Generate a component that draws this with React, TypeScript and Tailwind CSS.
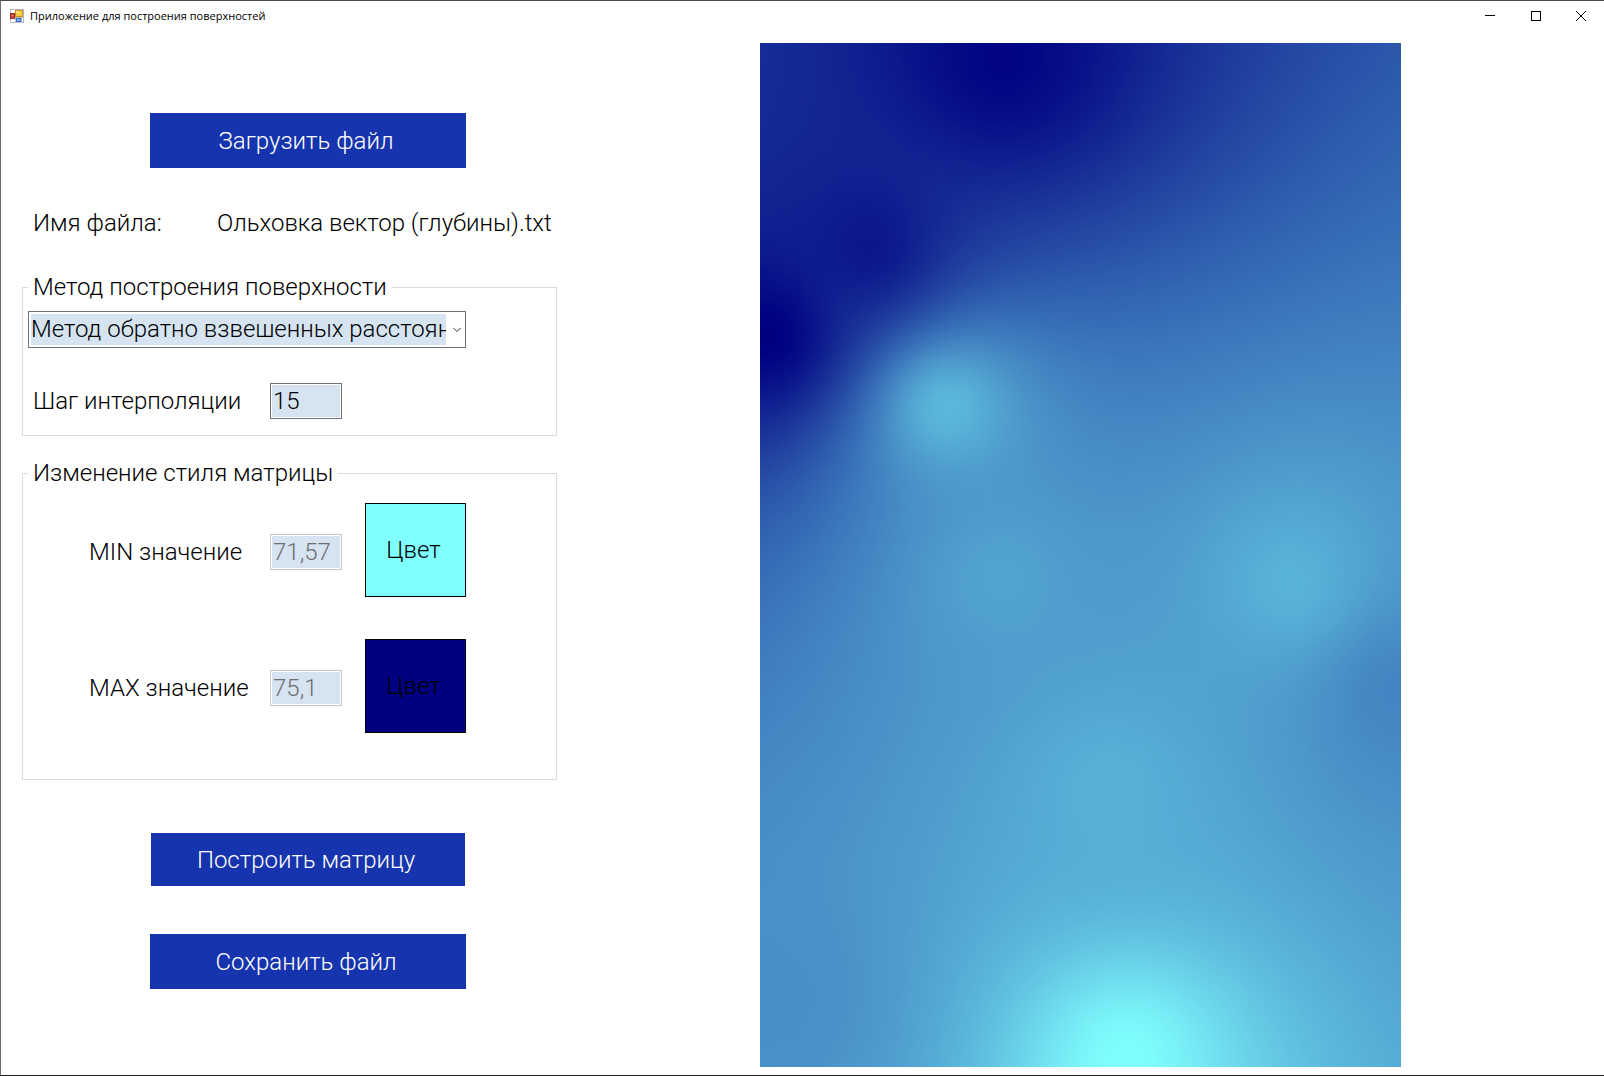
import { useEffect, useRef, useState } from "react";

type Sample = { x: number; y: number; t: number; weight: number };

// Depth samples: position on a 641 x 1024 field, t = 0 is the MIN colour and 1 the MAX colour.
const SAMPLES: Sample[] = [
  { x: 242, y: 16, t: 0.98, weight: 1.45 },
  { x: 108, y: 202, t: 0.91, weight: 1 },
  { x: 6, y: 292, t: 1, weight: 1.1 },
  { x: 188, y: 365, t: 0.28, weight: 0.95 },
  { x: 240, y: 534, t: 0.36, weight: 1 },
  { x: 531, y: 540, t: 0.3, weight: 1 },
  { x: 636, y: 648, t: 0.475, weight: 1 },
  { x: 349, y: 742, t: 0.31, weight: 1 },
  { x: 366, y: 1016, t: 0, weight: 0.8 },
  { x: 10, y: 955, t: 0.44, weight: 1 },
];

const FIELD_W = 641;
const FIELD_H = 1024;
const COLS = 178;
const ROWS = 284;
const MIN_COLOR = [128, 255, 255];
const MAX_COLOR = [0, 0, 128];

function interpolate(x: number, y: number) {
  let sum = 0;
  let weights = 0;
  for (const s of SAMPLES) {
    const d2 = (x - s.x) ** 2 + (y - s.y) ** 2 + 1;
    const w = s.weight / d2;
    sum += w * s.t;
    weights += w;
  }
  return sum / weights;
}

function Surface() {
  const ref = useRef<HTMLCanvasElement>(null);
  useEffect(() => {
    const ctx = ref.current?.getContext("2d");
    if (!ctx) return;
    const image = ctx.createImageData(COLS, ROWS);
    for (let r = 0; r < ROWS; r++) {
      for (let c = 0; c < COLS; c++) {
        const t = interpolate(((c + 0.5) * FIELD_W) / COLS, ((r + 0.5) * FIELD_H) / ROWS);
        const i = (r * COLS + c) * 4;
        for (let k = 0; k < 3; k++) {
          image.data[i + k] = MIN_COLOR[k] + (MAX_COLOR[k] - MIN_COLOR[k]) * t;
        }
        image.data[i + 3] = 255;
      }
    }
    ctx.putImageData(image, 0, 0);
  }, []);
  return (
    <canvas
      ref={ref}
      width={COLS}
      height={ROWS}
      role="img"
      aria-label="Поверхность глубин"
      className="block aspect-[641/1024] h-[calc(100vh-52px)] min-h-[640px]"
    />
  );
}

function FormIcon() {
  return (
    <svg width="14" height="14" viewBox="0 0 14 14" shapeRendering="crispEdges" aria-hidden="true">
      <rect x="0" y="0" width="14" height="14" fill="#b9bcc0" />
      <rect x="1" y="1" width="4" height="3" fill="#fff" />
      <rect x="1" y="10" width="4" height="3" fill="#fff" />
      <rect x="12" y="9" width="1" height="4" fill="#fff" />
      <rect x="0" y="4" width="5" height="6" fill="#9c2a2a" />
      <rect x="1" y="5" width="3" height="4" fill="#c94a44" />
      <rect x="2" y="6" width="1" height="1" fill="#f0b0a8" />
      <rect x="5" y="1" width="8" height="7" fill="#c9921a" />
      <rect x="6" y="2" width="6" height="5" fill="#f8cf3f" />
      <rect x="6" y="2" width="3" height="2" fill="#fde98a" />
      <rect x="6" y="9" width="5" height="4" fill="#3c6fc4" />
      <rect x="7" y="10" width="3" height="2" fill="#86b1ee" />
    </svg>
  );
}

function TitleBar() {
  return (
    <header className="flex h-[30px] items-center pl-[9px] font-['Open_Sans','Noto_Sans',sans-serif] text-[11px] leading-[16px] font-normal text-black">
      <FormIcon />
      <h1 className="ml-[6px] flex-1">Приложение для построения поверхностей</h1>
      <button aria-label="Свернуть" className="flex h-full w-[46px] items-center justify-center">
        <svg width="10" height="10" shapeRendering="crispEdges"><path d="M0 4.5H10" stroke="#000" /></svg>
      </button>
      <button aria-label="Развернуть" className="flex h-full w-[45px] items-center justify-center">
        <svg width="10" height="10" shapeRendering="crispEdges"><path d="M.5 .5H9.5V9.5H.5Z" fill="none" stroke="#000" /></svg>
      </button>
      <button aria-label="Закрыть" className="flex h-full w-[46px] items-center justify-center">
        <svg width="10" height="10"><path d="M0 0L10 10M10 0L0 10" stroke="#000" /></svg>
      </button>
    </header>
  );
}

const action = "block bg-[#1534ad] pr-[4px] text-white";
const field = "h-[36px] w-[72px] border bg-[#d6e4f2] px-[2px] shadow-[inset_0_0_0_1px_#fff]";
const swatch = "h-[94px] w-[101px] border border-black pr-[4px] text-black";

function ValueRow({ id, label, value, swatchClass }: { id: string; label: string; value: string; swatchClass: string }) {
  return (
    <div className="flex items-start pl-[61px]">
      <div className="flex items-center pt-[31px]">
        <label htmlFor={id} className="w-[181px]">{label}</label>
        <input id={id} defaultValue={value} disabled className={`${field} border-[#c3c5ca] text-[#6d6d6d]`} />
      </div>
      <button className={`${swatch} ml-[23px] ${swatchClass}`}>Цвет</button>
    </div>
  );
}

export default function App() {
  const [method, setMethod] = useState("idw");
  return (
    <div className="flex min-h-screen flex-col border-y border-l border-t-[#4a4a4a] border-b-[#222] border-l-[#6b6b6b] bg-white font-['Roboto',sans-serif] text-[24px] leading-[28px] font-light text-black">
      <TitleBar />
      <main className="flex flex-1">
        <form className="ml-[21px] w-[535px] shrink-0 pt-[82px]" onSubmit={(e) => e.preventDefault()}>
          <button type="button" className={`${action} ml-[128px] h-[55px] w-[316px]`}>Загрузить файл</button>
          <dl className="mt-[41px] flex pl-[11px]">
            <dt className="w-[184px]">Имя файла:</dt>
            <dd className="whitespace-nowrap">Ольховка вектор (глубины).txt</dd>
          </dl>

          <fieldset className="mt-[36px] h-[163px] border border-[#dcdcdc] px-[5px]">
            <legend className="px-[5px]">Метод построения поверхности</legend>
            <label className="mt-[10px] flex h-[37px] w-[438px] items-center border border-[#6f7278] p-[2px]">
              <select
                aria-label="Метод построения поверхности"
                value={method}
                onChange={(e) => setMethod(e.target.value)}
                className="h-[31px] w-[415px] appearance-none overflow-hidden bg-[#d6e4f2] pb-[2px] text-clip"
              >
                <option value="idw">Метод обратно взвешенных расстояний</option>
              </select>
              <svg className="ml-[7px]" width="8" height="6" aria-hidden="true">
                <path d="M.5 1L4 4.5L7.5 1" fill="none" stroke="#333" />
              </svg>
            </label>
            <div className="mt-[35px] flex items-center pl-[5px]">
              <label htmlFor="step" className="w-[237px]">Шаг интерполяции</label>
              <input id="step" defaultValue="15" className={`${field} border-[#6f7278]`} />
            </div>
          </fieldset>

          <fieldset className="mt-[23px] h-[321px] border border-[#dcdcdc] px-[5px]">
            <legend className="px-[5px]">Изменение стиля матрицы</legend>
            <div className="mt-[16px] flex flex-col gap-[42px]">
              <ValueRow id="min" label="MIN значение" value="71,57" swatchClass="bg-[#80ffff]" />
              <ValueRow id="max" label="MAX значение" value="75,1" swatchClass="bg-[#000080]" />
            </div>
          </fieldset>

          <button type="button" className={`${action} mt-[53px] ml-[129px] h-[53px] w-[314px]`}>Построить матрицу</button>
          <button type="button" className={`${action} mt-[48px] ml-[128px] h-[55px] w-[316px]`}>Сохранить файл</button>
        </form>
        <section className="flex flex-1 justify-center pt-[12px]">
          <Surface />
        </section>
      </main>
    </div>
  );
}
